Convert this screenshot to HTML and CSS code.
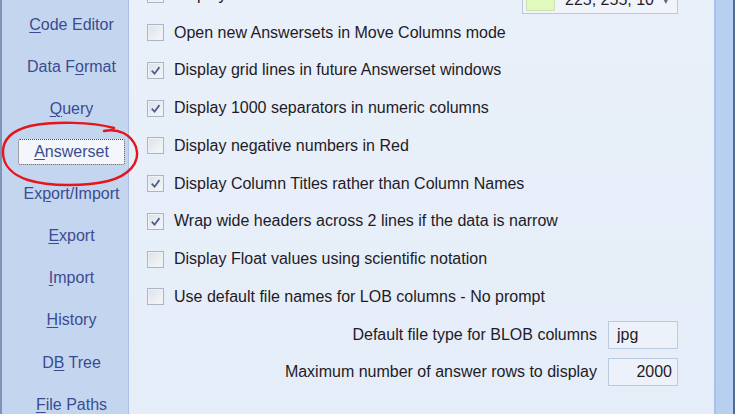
FILE: index.html
```html
<!DOCTYPE html>
<html lang="en">
<head>
    <meta charset="UTF-8">
    <title>Options - Answerset</title>
    <link rel="stylesheet" href="styles.css">
</head>
<body>
    <div class="window">
        <div class="edge-left"></div>

        <nav class="sidebar">
            <div class="nav-item"><span><u>C</u>ode Editor</span></div>
            <div class="nav-item"><span>Data F<u>o</u>rmat</span></div>
            <div class="nav-item"><span><u>Q</u>uery</span></div>
            <div class="nav-item"><span class="focus"><span><u>A</u>nswerset</span></span></div>
            <div class="nav-item"><span>Ex<u>p</u>ort/Import</span></div>
            <div class="nav-item"><span><u>E</u>xport</span></div>
            <div class="nav-item"><span><u>I</u>mport</span></div>
            <div class="nav-item"><span><u>H</u>istory</span></div>
            <div class="nav-item"><span>D<u>B</u> Tree</span></div>
            <div class="nav-item"><span><u>F</u>ile Paths</span></div>
        </nav>

        <main class="panel">
            <ul class="options">
                <li class="option">
                    <span class="box"></span><span>Display alternate Answerset rows in color</span>
                    <div class="color-combo">
                        <span class="swatch"></span>
                        <span class="combo-text">225, 255, 10</span>
                        <span class="combo-arrow">&#9662;</span>
                    </div>
                </li>
                <li class="option"><span class="box"></span><span>Open new Answersets in Move Columns mode</span></li>
                <li class="option"><span class="box checked"><svg viewBox="0 0 16 16"><path d="M4 8.2 L7 11.4 L12.2 4.4"/></svg></span><span>Display grid lines in future Answerset windows</span></li>
                <li class="option"><span class="box checked"><svg viewBox="0 0 16 16"><path d="M4 8.2 L7 11.4 L12.2 4.4"/></svg></span><span>Display 1000 separators in numeric columns</span></li>
                <li class="option"><span class="box"></span><span>Display negative numbers in Red</span></li>
                <li class="option"><span class="box checked"><svg viewBox="0 0 16 16"><path d="M4 8.2 L7 11.4 L12.2 4.4"/></svg></span><span>Display Column Titles rather than Column Names</span></li>
                <li class="option"><span class="box checked"><svg viewBox="0 0 16 16"><path d="M4 8.2 L7 11.4 L12.2 4.4"/></svg></span><span>Wrap wide headers across 2 lines if the data is narrow</span></li>
                <li class="option"><span class="box"></span><span>Display Float values using scientific notation</span></li>
                <li class="option"><span class="box"></span><span>Use default file names for LOB columns - No prompt</span></li>
            </ul>

            <div class="fields">
                <label class="field-label" for="blobType">Default file type for BLOB columns</label>
                <input class="field-input" id="blobType" type="text" value="jpg">
                <label class="field-label" for="maxRows">Maximum number of answer rows to display</label>
                <input class="field-input number" id="maxRows" type="text" value="2000">
            </div>
        </main>

        <div class="edge-right"></div>
    </div>

    <!-- red hand-drawn circle around the Answerset tab -->
    <svg class="annotation" viewBox="0 0 740 414">
        <path d="M104 131 C118 128, 131 134, 136 147 C141 163, 128 176, 108 181 C88 186, 50 187, 28 180 C12 175, 3 165, 3 152 C3 138, 14 130, 30 126 C55 121, 92 122, 114 128"/>
    </svg>
</body>
</html>
```

FILE: styles.css
```css
body {
    margin: 0;
    background-color: #ffffff;
    font-family: 'Liberation Sans', Arial, sans-serif;
    overflow: hidden;
}
.window {
    display: flex;
    width: 735px;
    height: 414px;
    overflow: hidden;
}
.edge-left {
    width: 2px;
    background-color: #c4d6ef;
    border-left: 2px solid #7e94b6;
}
.sidebar {
    width: 107px;
    padding: 4px 3px 0 14px;
    background-color: #c4d6ef;
    border-right: 1px solid #a9c1e6;
    display: flex;
    flex-direction: column;
    flex-shrink: 0;
}
.nav-item {
    height: 42.2px;
    flex-shrink: 0;
    display: flex;
    align-items: center;
    justify-content: center;
    font-size: 16px;
    color: #3a4c8f;
    white-space: nowrap;
}
.nav-item u {
    text-underline-offset: 2px;
}
.focus {
    display: flex;
    align-items: center;
    justify-content: center;
    width: 107px;
    height: 24px;
    background-color: #f3f6fb;
    border: 1px dotted #4a4a4a;
    border-radius: 2px;
}
.panel {
    flex: 1;
    background: linear-gradient(#e9f0fa, #e5edf8);
    padding: 0 36px 0 18px;
    overflow: hidden;
}
.options {
    list-style: none;
    margin: -24px 0 0 0;
    padding: 0;
}
.option {
    height: 37.75px;
    display: flex;
    align-items: center;
    font-size: 16px;
    color: #1f1b26;
    white-space: nowrap;
}
.box {
    width: 15px;
    height: 15px;
    margin-right: 10px;
    border: 1px solid #a9b6c6;
    background: linear-gradient(135deg, #dde2e9, #f6f7f9);
    box-shadow: inset 0 0 0 1px #eef1f5;
    flex-shrink: 0;
    display: flex;
    align-items: center;
    justify-content: center;
}
.box svg {
    width: 15px;
    height: 15px;
}
.box path {
    fill: none;
    stroke: #4d5f8c;
    stroke-width: 1.9;
}
.color-combo {
    margin-left: auto;
    align-self: flex-end;
    width: 156px;
    height: 27px;
    border: 1px solid #b8c9de;
    background-color: #f1f5fb;
    display: flex;
    align-items: center;
    padding: 0 8px 0 3px;
    box-sizing: border-box;
}
.swatch {
    width: 27px;
    height: 19px;
    background-color: #e2f9bd;
    border: 1px solid #cfe0b4;
}
.combo-text {
    margin-left: 10px;
    font-size: 16px;
    color: #1f1b26;
}
.combo-arrow {
    margin-left: auto;
    font-size: 11px;
    color: #5a6a80;
}
.fields {
    display: grid;
    grid-template-columns: 1fr 70px;
    grid-auto-rows: 37.75px;
    column-gap: 11px;
    align-items: center;
}
.field-label {
    text-align: right;
    font-size: 16px;
    color: #1f1b26;
}
.field-input {
    width: 70px;
    height: 28px;
    box-sizing: border-box;
    border: 1px solid #b9cbe2;
    background-color: #edf2fa;
    font-family: 'Liberation Sans', Arial, sans-serif;
    font-size: 16px;
    color: #1f1b26;
    padding: 0 8px;
    outline: none;
}
.field-input.number {
    text-align: right;
    padding: 0 5px;
}
.edge-right {
    width: 17px;
    background-color: #b9cfef;
    border-left: 2px solid #a6c1ea;
    border-right: 2px solid #4e6a92;
    flex-shrink: 0;
}
.annotation {
    position: absolute;
    left: 0;
    top: 0;
    width: 740px;
    height: 414px;
    pointer-events: none;
}
.annotation path {
    fill: none;
    stroke: #e5151b;
    stroke-width: 2.4;
    stroke-linecap: round;
}
```
